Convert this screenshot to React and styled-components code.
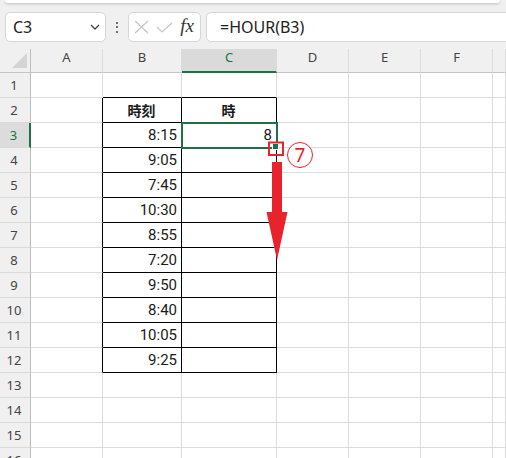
import React from "react";
import styled, { createGlobalStyle } from "styled-components";

const GlobalStyle = createGlobalStyle`
  html, body {
    margin: 0;
    padding: 0;
    background: #fff;
  }
  body {
    font-family: "Noto Sans", "Noto Sans CJK JP", sans-serif;
  }
`;

const Screen = styled.div`
  position: relative;
  width: 506px;
  height: 458px;
  overflow: hidden;
  background: #fff;
`;

const Top = styled.div`
  background: #f0f0f0;
  height: 49px;
`;

const RibbonEdge = styled.div`
  height: 3px;
  margin: 0 6px 0 5px;
  background: #fff;
  border-radius: 0 0 6px 6px;
  box-shadow: 0 1px 3px rgba(0, 0, 0, 0.2);
`;

const FormulaBar = styled.div`
  display: flex;
  align-items: center;
  height: 30px;
  margin-top: 9px;
  padding-left: 5px;
`;

const Box = styled.div`
  box-sizing: border-box;
  height: 30px;
  background: #fff;
  border: 1px solid #d6d6d6;
  border-radius: 5px;
  display: flex;
  align-items: center;
`;

const NameBox = styled(Box)`
  width: 101px;
  padding: 0 5px 0 7px;
  justify-content: space-between;
  font-size: 16px;
  color: #222;
`;

const Dots = styled.div`
  width: 22px;
  display: flex;
  flex-direction: column;
  align-items: center;
  gap: 2.5px;
  span {
    width: 2px;
    height: 2px;
    background: #444;
    border-radius: 1px;
  }
`;

const Buttons = styled(Box)`
  width: 73px;
  padding: 0 5px 0 5px;
  justify-content: space-between;
`;

const Fx = styled.span`
  font-family: "Liberation Serif", "DejaVu Serif", serif;
  font-style: italic;
  font-size: 19px;
  color: #333;
  padding-right: 1px;
  margin-top: -2px;
`;

const Input = styled(Box)`
  flex: 1;
  margin-left: 5px;
  margin-right: -8px;
  padding-left: 13px;
  font-size: 16px;
  color: #222;
`;

const Sheet = styled.div`
  display: grid;
  grid-template-columns: 31px 72px 79px 95px 72px 72px 72px 1fr;
  grid-template-rows: 24px;
  grid-auto-rows: 25px;
`;

const Corner = styled.div`
  box-sizing: border-box;
  background: #f0f0f0;
  border-right: 1px solid #bdbdbd;
  border-bottom: 1px solid #c4c4c4;
  display: flex;
  justify-content: flex-end;
  align-items: flex-end;
  padding: 0 3px 4px 0;
  span {
    width: 15px;
    height: 15px;
    background: #d4d4d4;
    clip-path: polygon(100% 0, 100% 100%, 0 100%);
  }
`;

const ColHead = styled.div`
  box-sizing: border-box;
  background: ${(p) => (p.$active ? "#dadada" : "#f0f0f0")};
  border-right: 1px solid #dcdcdc;
  border-bottom: ${(p) => (p.$active ? "2px solid #1e7145" : "1px solid #c4c4c4")};
  color: ${(p) => (p.$active ? "#1e7145" : "#444")};
  font-size: 13px;
  display: flex;
  justify-content: center;
  align-items: center;
  padding-bottom: ${(p) => (p.$active ? "6px" : "7px")};
`;

const RowHead = styled.div`
  box-sizing: border-box;
  background: ${(p) => (p.$active ? "#dcdcdc" : "#f0f0f0")};
  border-right: ${(p) => (p.$active ? "2px solid #1e7145" : "1px solid #bdbdbd")};
  border-bottom: 1px solid #dadada;
  color: ${(p) => (p.$active ? "#1e7145" : "#444")};
  font-size: 13px;
  display: flex;
  justify-content: center;
  align-items: center;
  padding-right: 2px;
`;

const Cell = styled.div`
  position: relative;
  box-sizing: border-box;
  border-right: 1px solid ${(p) => p.$right};
  border-bottom: 1px solid ${(p) => p.$bottom};
  display: flex;
  align-items: center;
  justify-content: ${(p) => (p.$center ? "center" : "flex-end")};
  padding: 0 4px 0 3px;
  font-family: ${(p) => (p.$bold ? '"Noto Sans CJK JP", sans-serif' : 'Roboto, "Noto Sans", sans-serif')};
  font-size: ${(p) => (p.$bold ? "14px" : "15px")};
  font-weight: ${(p) => (p.$bold ? 700 : 400)};
  color: #1a1a1a;
  ${(p) =>
    p.$selected &&
    `
    z-index: 2;
    outline: 2px solid #1e7145;
    outline-offset: -1px;
  `}
`;

const Handle = styled.span`
  position: absolute;
  right: -3px;
  bottom: -3px;
  width: 7px;
  height: 7px;
  box-sizing: border-box;
  background: #1e7145;
  border: 1px solid #fff;
`;

const Overlay = styled.svg`
  position: absolute;
  left: 0;
  top: 0;
  z-index: 5;
  pointer-events: none;
`;

const StepBadge = styled.span`
  position: absolute;
  left: 287px;
  top: 142px;
  z-index: 6;
  box-sizing: border-box;
  width: 26px;
  height: 26px;
  border: 1.5px solid #e8232b;
  border-radius: 50%;
  color: #e8232b;
  font-family: "Noto Sans", sans-serif;
  font-size: 19px;
  line-height: 1;
  display: flex;
  align-items: center;
  justify-content: center;
  padding-top: 1px;
  background: #fff;
`;

const COLS = ["A", "B", "C", "D", "E", "F", ""];
const ROWS = 16;
const GRID = "#dcdcdc";
const BLACK = "#000";

const values = {
  "2,1": { text: "時刻", bold: true },
  "2,2": { text: "時", bold: true },
  "3,1": { text: "8:15" },
  "3,2": { text: "8" },
  "4,1": { text: "9:05" },
  "5,1": { text: "7:45" },
  "6,1": { text: "10:30" },
  "7,1": { text: "8:55" },
  "8,1": { text: "7:20" },
  "9,1": { text: "9:50" },
  "10,1": { text: "8:40" },
  "11,1": { text: "10:05" },
  "12,1": { text: "9:25" },
};

const boxed = (r, c) => r >= 2 && r <= 12 && (c === 1 || c === 2);

function ChevronDown() {
  return (
    <svg width="10" height="6" viewBox="0 0 10 6">
      <polyline points="1,1 5,5 9,1" fill="none" stroke="#444" strokeWidth="1.3" />
    </svg>
  );
}

function Cross() {
  return (
    <svg width="15" height="14" viewBox="0 0 15 14">
      <path d="M1 1 L14 13 M14 1 L1 13" stroke="#c6c6c6" strokeWidth="1.2" fill="none" />
    </svg>
  );
}

function Check() {
  return (
    <svg width="17" height="11" viewBox="0 0 17 11">
      <polyline points="1,5 6,10 16,1" fill="none" stroke="#c6c6c6" strokeWidth="1.2" />
    </svg>
  );
}

export default function App() {
  const rows = [];
  for (let r = 1; r <= ROWS; r++) {
    rows.push(
      <RowHead key={"h" + r} $active={r === 3}>
        {r}
      </RowHead>
    );
    COLS.forEach((_, c) => {
      const v = values[r + "," + c];
      const selected = r === 3 && c === 2;
      rows.push(
        <Cell
          key={r + "-" + c}
          $right={boxed(r, c) || boxed(r, c + 1) ? BLACK : GRID}
          $bottom={boxed(r, c) || boxed(r + 1, c) ? BLACK : GRID}
          $center={v && v.bold}
          $bold={v && v.bold}
          $selected={selected}
        >
          {v ? v.text : null}
          {selected && <Handle />}
        </Cell>
      );
    });
  }

  return (
    <Screen>
      <GlobalStyle />
      <Top>
        <RibbonEdge />
        <FormulaBar>
          <NameBox>
            <span>C3</span>
            <ChevronDown />
          </NameBox>
          <Dots>
            <span />
            <span />
            <span />
          </Dots>
          <Buttons>
            <Cross />
            <Check />
            <Fx>fx</Fx>
          </Buttons>
          <Input>=HOUR(B3)</Input>
        </FormulaBar>
      </Top>
      <Sheet>
        <Corner>
          <span />
        </Corner>
        {COLS.map((c, i) => (
          <ColHead key={"c" + i} $active={c === "C"}>
            {c}
          </ColHead>
        ))}
        {rows}
      </Sheet>
      <Overlay width="506" height="458" viewBox="0 0 506 458">
        <rect x="269" y="142.5" width="14" height="12.5" fill="none" stroke="#e8232b" strokeWidth="2" />
        <rect x="272" y="162" width="10" height="51" fill="#e8232b" />
        <polygon points="266.5,212 287.5,212 277,260" fill="#e8232b" />
      </Overlay>
      <StepBadge>7</StepBadge>
    </Screen>
  );
}
